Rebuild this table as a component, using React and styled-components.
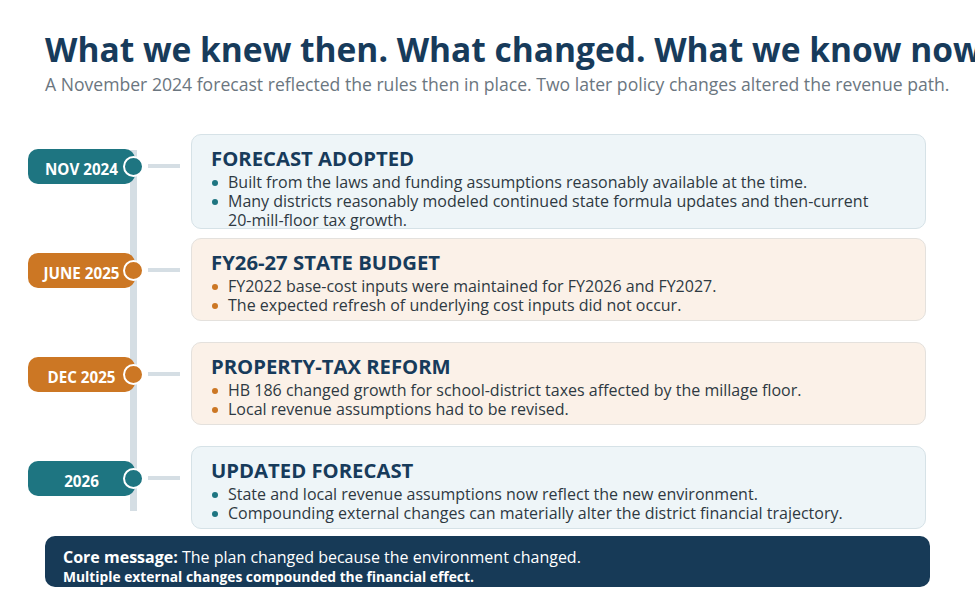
import styled, { createGlobalStyle } from 'styled-components';

const Global = createGlobalStyle`
  html, body {
    margin: 0;
    padding: 0;
    background: #ffffff;
  }
  body {
    font-family: 'Open Sans', 'Noto Sans', sans-serif;
    overflow: hidden;
  }
`;

const Page = styled.div`
  width: 975px;
  height: 609px;
  padding-top: 29px;
  box-sizing: border-box;
  overflow: hidden;
`;

const Header = styled.header`
  margin-left: 45px;
  white-space: nowrap;
`;

const Title = styled.h1`
  margin: 0;
  font-size: 33.5px;
  line-height: 40px;
  font-weight: 700;
  color: #173b5b;
`;

const Subtitle = styled.p`
  margin: 3px 0 0;
  font-size: 17.6px;
  line-height: 24px;
  color: #6b7680;
`;

const Timeline = styled.div`
  position: relative;
  margin: 38px 0 0 28px;

  &::before {
    content: '';
    position: absolute;
    left: 102px;
    top: 16px;
    bottom: 18px;
    width: 7px;
    background: #d5dee4;
  }
`;

const Row = styled.div`
  display: flex;
  align-items: flex-start;
  height: 104px;

  &:last-child {
    height: auto;
  }
`;

const Marker = styled.div`
  position: relative;
  z-index: 1;
  display: flex;
  align-items: center;
  height: 35px;
  margin-top: 14.5px;
`;

const Pill = styled.div`
  width: 107px;
  height: 35px;
  border-radius: 10px;
  background: ${p => p.$color};
  color: #ffffff;
  font-size: 15.2px;
  font-weight: 700;
  display: flex;
  align-items: center;
  justify-content: center;
  padding-top: 5px;
  box-sizing: border-box;
`;

const Dot = styled.span`
  width: 21px;
  height: 21px;
  box-sizing: border-box;
  border-radius: 50%;
  border: 2.5px solid #ffffff;
  background: ${p => p.$color};
  margin-left: -12px;
`;

const Connector = styled.span`
  width: 32px;
  height: 4px;
  margin-left: 4px;
  background: #d5dee4;
`;

const Card = styled.section`
  flex: 0 0 735px;
  height: ${p => p.$height}px;
  box-sizing: border-box;
  margin-left: 11px;
  padding: 11px 19px 0;
  border: 1px solid ${p => p.$border};
  border-radius: 10px;
  background: ${p => p.$bg};
`;

const CardTitle = styled.h2`
  margin: 0;
  font-size: 20.3px;
  line-height: 24px;
  font-weight: 700;
  color: #173b5b;
`;

const Bullets = styled.ul`
  list-style: none;
  margin: 3px 0 0;
  padding: 0;
`;

const Bullet = styled.li`
  position: relative;
  padding-left: 17px;
  font-size: 16px;
  line-height: 19px;
  color: #2e3942;

  &::before {
    content: '';
    position: absolute;
    left: 1px;
    top: 7px;
    width: 6px;
    height: 6px;
    border-radius: 50%;
    background: ${p => p.$color};
  }
`;

const NoBreak = styled.span`
  white-space: nowrap;
`;

const Footer = styled.footer`
  margin: 7px 0 0 45px;
  width: 885px;
  height: 51px;
  box-sizing: border-box;
  padding: 11px 18px 0;
  border-radius: 10px;
  background: #173a57;
  color: #ffffff;
`;

const Message = styled.p`
  margin: 0;
  font-size: 16px;
  line-height: 20px;

  strong {
    font-weight: 700;
  }
`;

const Note = styled.p`
  margin: 1px 0 0;
  font-size: 13.8px;
  line-height: 17px;
  font-weight: 700;
`;

const TEAL = '#1e7581';
const ORANGE = '#cc7724';

const themes = {
  teal: { accent: TEAL, bg: '#eef5f8', border: '#d6e2e7' },
  orange: { accent: ORANGE, bg: '#fbf1e8', border: '#e4e1dd' },
};

const events = [
  {
    date: 'NOV 2024',
    tone: 'teal',
    height: 95,
    title: 'FORECAST ADOPTED',
    points: [
      'Built from the laws and funding assumptions reasonably available at the time.',
      <>
        Many districts reasonably modeled continued state formula updates and then-current{' '}
        <NoBreak>20-mill-floor</NoBreak> tax growth.
      </>,
    ],
  },
  {
    date: 'JUNE 2025',
    tone: 'orange',
    height: 83,
    title: 'FY26-27 STATE BUDGET',
    points: [
      'FY2022 base-cost inputs were maintained for FY2026 and FY2027.',
      'The expected refresh of underlying cost inputs did not occur.',
    ],
  },
  {
    date: 'DEC 2025',
    tone: 'orange',
    height: 83,
    title: 'PROPERTY-TAX REFORM',
    points: [
      'HB 186 changed growth for school-district taxes affected by the millage floor.',
      'Local revenue assumptions had to be revised.',
    ],
  },
  {
    date: '2026',
    tone: 'teal',
    height: 83,
    title: 'UPDATED FORECAST',
    points: [
      'State and local revenue assumptions now reflect the new environment.',
      'Compounding external changes can materially alter the district financial trajectory.',
    ],
  },
];

export default function App() {
  return (
    <Page>
      <Global />
      <Header>
        <Title>What we knew then. What changed. What we know now.</Title>
        <Subtitle>
          A November 2024 forecast reflected the rules then in place. Two later policy changes altered the revenue path.
        </Subtitle>
      </Header>

      <Timeline>
        {events.map(ev => {
          const t = themes[ev.tone];
          return (
            <Row key={ev.date}>
              <Marker>
                <Pill $color={t.accent}>{ev.date}</Pill>
                <Dot $color={t.accent} />
                <Connector />
              </Marker>
              <Card $bg={t.bg} $border={t.border} $height={ev.height}>
                <CardTitle>{ev.title}</CardTitle>
                <Bullets>
                  {ev.points.map((pt, i) => (
                    <Bullet key={i} $color={t.accent}>{pt}</Bullet>
                  ))}
                </Bullets>
              </Card>
            </Row>
          );
        })}
      </Timeline>

      <Footer>
        <Message>
          <strong>Core message:</strong> The plan changed because the environment changed.
        </Message>
        <Note>Multiple external changes compounded the financial effect.</Note>
      </Footer>
    </Page>
  );
}
